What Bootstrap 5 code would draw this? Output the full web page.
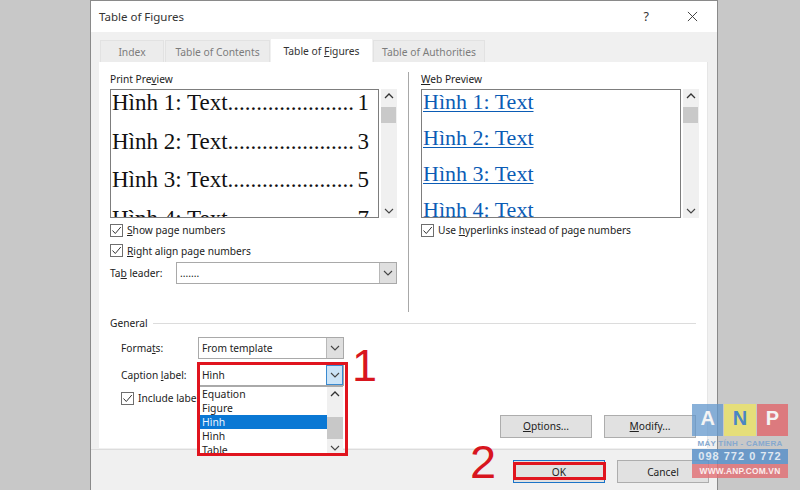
<!DOCTYPE html>
<html lang="en"><head><meta charset="utf-8"><title>Table of Figures</title>
<link rel="stylesheet" href="https://cdn.jsdelivr.net/npm/bootstrap@5.3.0/dist/css/bootstrap.min.css">
<style>
html,body{height:490px;overflow:hidden}
body{background:#c8c8c8;font-family:"Noto Sans","Open Sans",sans-serif;font-size:10.2px;color:#222;line-height:14px;position:relative}
.dlg{margin-left:90px;margin-top:0;width:628px;height:490px;background:#f0f0f0;border:1px solid #8a8a8a;border-bottom:0;display:flex;flex-direction:column}
.dlg-title{height:31px;background:#fff;padding:0 19px 0 8px;font-size:11.5px;color:#333}
.dlg-help{font-size:12.5px;margin-right:38px}
.tabs-area{padding:7px 8px 0 8px;height:417px;flex:none}
.ntabs{border:0;height:23px;gap:1px;flex-wrap:nowrap;padding-left:1px}
.ntab{background:#ececec;color:#7c7c7c;border:1px solid #e2e2e2;border-bottom:0;height:22px;margin-top:1px;font-size:10.3px;display:flex;align-items:center;justify-content:center}
.ntab-on{background:#fff;color:#333;height:23px;margin-top:0;border-color:#fff}
.t1{width:64px}.t2{width:105px}.t3{width:101px}.t4{width:112px}
.panel{background:#fff;height:386px;width:609px;padding:10px 11px 0 11px;border-right:1px solid #e6e6e6}
.cols{height:241px}
.col-print{width:287px;flex:none}
.col-web{flex:1;border-left:1px solid #a8a8a8;margin-left:11px;padding-left:12px;height:240px}
.lbl{height:17px;display:block}
.pv-row{height:129px}
.pv{border:1px solid #7d7d7d;background:#fff;overflow:hidden;font-family:"Liberation Serif",serif}
.pv-print{width:269px;font-size:23px;padding-left:1px;color:#111}
.pv-web{width:260px;font-size:22px;padding-left:1px;color:#0b5cb5}
.pv-line{height:38.5px;line-height:26px;white-space:nowrap;display:flex;justify-content:space-between;padding-right:9px}
.pv-web .pv-line{height:36px;line-height:24px;display:block}
.pv-web u{text-underline-offset:2px;text-decoration-thickness:1px}
.sbar{width:16px;margin-left:2px;background:#f0f0f0;display:flex;flex-direction:column;align-items:center;justify-content:space-between;padding:4px 0;position:relative}
.sthumb{position:absolute;left:0;right:1px;top:18px;height:16px;background:#c9c9c9}
.chk-row{display:flex;align-items:center;gap:4px;height:20.5px}
.chk-first{margin-top:2px}
.cbox{width:13px;height:13px;border:1px solid #6e6e6e;background:#fff;flex:none;display:block}
.combo{display:flex;align-items:center;background:#fff;border:1px solid #a9a9a9;height:22px;padding-left:3px;justify-content:space-between}
.cbtn{width:17px;height:100%;background:#dfdfdf;border-left:1px solid #b8b8b8;display:flex;align-items:center;justify-content:center;flex:none}
.cbtn-on{background:#cce4f7;border:1px solid #3a8ad0}
.leader-row{height:24px}
.leader{width:221px}
.gen{margin-top:3px;height:14px}
.gen-line{flex:1;height:1px;background:#dcdcdc;margin-left:5px}
.gen-rows{padding-left:11px}
.frow{display:flex;align-items:center;height:22px;margin-top:7px}
.frow2{margin-top:5px}
.fl{width:77px}
.fc{width:146px;position:relative}
.ddlist{position:absolute;left:1px;right:0;top:21px;height:69px;background:#fff;z-index:2;display:flex;font-size:10.4px;overflow:hidden;border-top:1px solid #aaa}
.ddl{flex:1}
.ddi{height:14px;line-height:14px;padding-left:2px}
.ddsel{background:#0a78d4;color:#eaf4ff}
.ddbar{width:16px;background:#f0f0f0;display:flex;flex-direction:column;align-items:center;justify-content:space-between;padding:4px 0;position:relative}
.ddthumb{position:absolute;left:0;right:0;top:30px;height:22px;background:#c8c8c8}
.inc-row{margin-top:2px}
.wbtn{width:92px;height:23px;padding:0;border-radius:0;background:#e1e1e1;border:1px solid #adadad;font-size:10.2px;color:#222;line-height:20px}
.wbtn-def{border:1px solid #1b74c8}
.panel-btns{gap:12px;margin-top:6px}
.foot{height:41px;border-top:1px solid #dcdcdc;padding:10px 8px 0 0;gap:12px}
.mark-box{position:absolute;border:3px solid #e0141e;z-index:5;pointer-events:none}
.mb1{left:197px;top:362px;width:151px;height:94px}
.mb2{left:513px;top:462px;width:93px;height:18px}
.marknum{position:absolute;color:#d8161e;font-family:"Liberation Sans",sans-serif;line-height:1;z-index:5}
.mn1{left:352px;top:343px;font-size:45px}
.mn2{left:470px;top:438px;font-size:47px}
.wm{position:absolute;left:692px;top:404px;width:96px;height:75px;z-index:6;font-family:"Liberation Sans",sans-serif;font-weight:700;text-align:center}
.wm-tiles{display:flex;height:32px;gap:1px}
.wmt{flex:1;color:#f4f4f4;font-size:20px;line-height:29px}
.wa{background:rgba(100,152,205,.76)}.wn{background:rgba(232,224,110,.88);color:#4a86c4}.wp{background:rgba(224,105,110,.82)}
.wm-a{font-size:8px;color:#86a9cf;height:13px;line-height:15px;white-space:nowrap;letter-spacing:.25px}
.wm-b{font-size:11px;letter-spacing:1px;color:#dfe8f2;background:rgba(90,145,200,.85);height:15px;line-height:15px;white-space:nowrap}
.wm-c{font-size:8.4px;letter-spacing:.2px;color:#fbeeee;background:rgba(226,110,115,.8);height:14px;line-height:14px;white-space:nowrap}
</style></head><body>
<svg width="0" height="0" class="position-absolute"><defs>
<symbol id="cd" viewBox="0 0 10 6"><path d="M1 1l4 4 4-4" fill="none" stroke="#444" stroke-width="1.1"/></symbol>
<symbol id="cu" viewBox="0 0 10 6"><path d="M1 5l4-4 4 4" fill="none" stroke="#333" stroke-width="1.3"/></symbol>
<symbol id="ck" viewBox="0 0 11 11"><path d="M1.5 5.5l2.8 3L9.8 2" fill="none" stroke="#333" stroke-width="1"/></symbol>
</defs></svg>
<div class="dlg">
 <div class="dlg-title d-flex align-items-center justify-content-between"><span>Table of Figures</span>
  <span class="d-flex align-items-center"><span class="dlg-help">?</span><svg width="11" height="11" viewBox="0 0 12 12"><path d="M1 1l10 10M11 1L1 11" stroke="#333" stroke-width="1"/></svg></span></div>
 <div class="tabs-area">
  <ul class="nav ntabs">
   <li class="ntab t1">Index</li><li class="ntab t2">Table of Contents</li><li class="ntab ntab-on t3"><span>Table of <u>F</u>igures</span></li><li class="ntab t4">Table of Authorities</li>
  </ul>
  <div class="panel">
   <div class="cols d-flex">
    <div class="col-print">
     <span class="lbl">Print Pre<u>v</u>iew</span>
     <div class="d-flex pv-row">
      <div class="pv pv-print">
       <div class="pv-line"><span>Hình 1: Text......................</span><span>1</span></div>
       <div class="pv-line"><span>Hình 2: Text......................</span><span>3</span></div>
       <div class="pv-line"><span>Hình 3: Text......................</span><span>5</span></div>
       <div class="pv-line"><span>Hình 4: Text......................</span><span>7</span></div>
      </div>
      <div class="sbar"><svg width="10" height="6"><use href="#cu"/></svg><div class="sthumb"></div><svg width="10" height="6"><use href="#cd"/></svg></div>
     </div>
     <div class="chk-row chk-first"><span class="cbox"><svg width="11" height="11" class="d-block"><use href="#ck"/></svg></span><span><u>S</u>how page numbers</span></div>
     <div class="chk-row"><span class="cbox"><svg width="11" height="11" class="d-block"><use href="#ck"/></svg></span><span><u>R</u>ight align page numbers</span></div>
     <div class="d-flex align-items-center leader-row"><span>Ta<u>b</u> leader:</span><div class="combo leader ms-auto"><span>.......</span><span class="cbtn"><svg width="10" height="6"><use href="#cd"/></svg></span></div></div>
    </div>
    <div class="col-web">
     <span class="lbl"><u>W</u>eb Preview</span>
     <div class="d-flex pv-row">
      <div class="pv pv-web">
       <div class="pv-line"><u>Hình 1: Text</u></div>
       <div class="pv-line"><u>Hình 2: Text</u></div>
       <div class="pv-line"><u>Hình 3: Text</u></div>
       <div class="pv-line"><u>Hình 4: Text</u></div>
      </div>
      <div class="sbar"><svg width="10" height="6"><use href="#cu"/></svg><div class="sthumb"></div><svg width="10" height="6"><use href="#cd"/></svg></div>
     </div>
     <div class="chk-row chk-first"><span class="cbox"><svg width="11" height="11" class="d-block"><use href="#ck"/></svg></span><span>Use <u>h</u>yperlinks instead of page numbers</span></div>
    </div>
   </div>
   <div class="gen d-flex align-items-center"><span>General</span><span class="gen-line"></span></div>
   <div class="gen-rows">
    <div class="frow"><span class="fl">Forma<u>t</u>s:</span><div class="combo fc"><span>From template</span><span class="cbtn"><svg width="10" height="6"><use href="#cd"/></svg></span></div></div>
    <div class="frow frow2"><span class="fl">Caption <u>l</u>abel:</span><div class="combo fc"><span>Hình</span><span class="cbtn cbtn-on"><svg width="10" height="6"><use href="#cd"/></svg></span>
      <div class="ddlist"><div class="ddl"><div class="ddi">Equation</div><div class="ddi">Figure</div><div class="ddi ddsel">Hình</div><div class="ddi">Hình</div><div class="ddi">Table</div></div>
       <div class="ddbar"><svg width="10" height="6"><use href="#cu"/></svg><div class="ddthumb"></div><svg width="10" height="6"><use href="#cd"/></svg></div></div>
     </div></div>
    <div class="chk-row inc-row"><span class="cbox"><svg width="11" height="11" class="d-block"><use href="#ck"/></svg></span><span>Include label</span></div>
   </div>
   <div class="d-flex justify-content-end panel-btns"><button class="btn wbtn"><u>O</u>ptions...</button><button class="btn wbtn"><u>M</u>odify...</button></div>
  </div>
 </div>
 <div class="foot d-flex justify-content-end"><button class="btn wbtn wbtn-def">OK</button><button class="btn wbtn">Cancel</button></div>
</div>
<div class="mark-box mb1"></div><div class="mark-box mb2"></div>
<div class="marknum mn1">1</div><div class="marknum mn2">2</div>
<div class="wm">
 <div class="wm-tiles"><div class="wmt wa">A</div><div class="wmt wn">N</div><div class="wmt wp">P</div></div>
 <div class="wm-a">MÁY TÍNH - CAMERA</div>
 <div class="wm-b">098 772 0 772</div>
 <div class="wm-c">WWW.ANP.COM.VN</div>
</div>
<script src="https://cdn.jsdelivr.net/npm/bootstrap@5.3.0/dist/js/bootstrap.bundle.min.js"></script>
</body></html>
